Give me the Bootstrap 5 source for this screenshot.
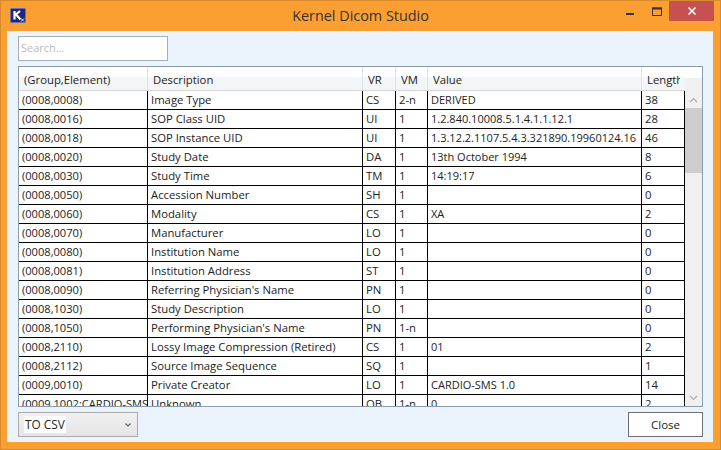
<!DOCTYPE html>
<html><head><meta charset="utf-8"><title>Kernel Dicom Studio</title>
<link href="https://cdn.jsdelivr.net/npm/bootstrap@5.3.0/dist/css/bootstrap.min.css" rel="stylesheet">
<style>
html,body{margin:0;height:450px;overflow:hidden;background:#fb9f33;}
body{font-family:"Open Sans","Noto Sans",sans-serif;font-size:11.3px;color:#222;}
.win{width:721px;height:450px;border:1px solid #d98a2c;background:#fb9f33;}
.titlebar{height:29px;}
.side{flex:0 0 105px;}
.logo{width:16px;height:15px;margin:7px 0 0 9px;}
.title{font-size:14.4px;color:#333;line-height:29px;}
.wb{height:20px;}
.wb-min{width:30px;}
.wb-max{width:24px;}
.wb-close{background:#c75050;width:45px;margin-right:6px;}
.client{margin:1px 7px 0 6px;height:411px;background:#ebf3fd;padding:5px 10px 0 11px;}
.search{width:150px;height:25px;border:1px solid #abadb3;background:#fff;color:#bbb;padding:2px;line-height:18px;font-size:11px;}
.grid{height:341px;margin-top:5px;border:1px solid #8a9bab;background:#fff;overflow:hidden;}
.gtable{table-layout:fixed;border-collapse:separate;border-spacing:0;width:666px;}
.gtable th{font-weight:400;height:24px;padding:3px 0 0 5px;border-right:1px solid #dde2e7;border-bottom:1px solid #d5d5d5;white-space:nowrap;background:linear-gradient(#fff 45%,#f4f5f6 45%);}
.gtable th div{overflow:hidden;}
.gtable th:last-child{border-right:0;padding-right:5px;}
.gtable td{height:19px;line-height:18px;padding:0 0 0 3px;border-right:1px solid #000;border-bottom:1px solid #000;white-space:nowrap;overflow:hidden;}
.gtable td:first-child{font-size:11.1px;}
.gtable td:nth-child(5){font-size:11px;}
.sb{width:17px;background:#f0f0f0;}
.sb-head{height:24px;background:linear-gradient(#fff 45%,#f0f0f1 45%);}
.sb-btn{height:17px;}
.sb-thumb{height:65px;background:#cdcdcd;}
.sb-track{flex:1;}
.sel{width:120px;height:25px;border:1px solid #acacac;background:linear-gradient(#f0f0f0,#e5e5e5);padding:0 6px;}
.sel-v{background:#fff;width:42px;margin-left:-1px;line-height:17px;font-size:11.8px;padding-left:1px;}
.close-btn{width:75px;height:25px;border:1px solid #707070;background:#fff;color:#222;font-size:11.5px;line-height:22px;padding:0;border-radius:0;}
.foot{margin-top:5px;}
</style></head>
<body>
<div class="win d-flex flex-column">
  <div class="titlebar d-flex">
    <div class="side"><svg class="logo" viewBox="0 0 16 15"><rect x=".5" y=".5" width="15" height="14" rx="1" fill="#20287e" stroke="#6a6fa8"/><path d="M4.500 3v8.500M4.500 7.500 10 3M6 6.500 10.500 11.500" stroke="#fff" stroke-width="2.200" fill="none"/><path d="M11 10.500l3 3M14 10.500l-3 3" stroke="#d8dcf2" stroke-width="1"/></svg></div>
    <div class="title flex-grow-1 text-center">Kernel Dicom Studio</div>
    <div class="side d-flex">
      <div class="wb wb-min d-flex align-items-center justify-content-center"><svg width="8" height="10" viewBox="0 0 8 10"><path d="M0 8h8" stroke="#333" stroke-width="2"/></svg></div>
      <div class="wb wb-max d-flex align-items-center justify-content-center"><svg width="10" height="9" viewBox="0 0 10 9"><path d="M.5 1h9v7.500H.5z" fill="none" stroke="#333"/><path d="M0 1.500h10" stroke="#333" stroke-width="2"/></svg></div>
      <div class="wb wb-close d-flex align-items-center justify-content-center"><svg width="10" height="10" viewBox="0 0 10 10"><path d="M1.500 1.500l7 7M8.500 1.500l-7 7" stroke="#fff" stroke-width="1.600"/></svg></div>
    </div>
  </div>
  <div class="client">
    <div class="search">Search...</div>
    <div class="grid d-flex">
      <table class="gtable flex-shrink-0">
        <colgroup><col style="width:129px"><col style="width:215px"><col style="width:33px"><col style="width:32px"><col style="width:214px"><col style="width:43px"></colgroup>
        <thead><tr><th><div>(Group,Element)</div></th><th><div>Description</div></th><th><div>VR</div></th><th><div>VM</div></th><th><div>Value</div></th><th><div>Length</div></th></tr></thead>
        <tbody>
        <tr><td>(0008,0008)</td><td>Image Type</td><td>CS</td><td>2-n</td><td>DERIVED</td><td>38</td></tr>
        <tr><td>(0008,0016)</td><td>SOP Class UID</td><td>UI</td><td>1</td><td>1.2.840.10008.5.1.4.1.1.12.1</td><td>28</td></tr>
        <tr><td>(0008,0018)</td><td>SOP Instance UID</td><td>UI</td><td>1</td><td>1.3.12.2.1107.5.4.3.321890.19960124.16</td><td>46</td></tr>
        <tr><td>(0008,0020)</td><td>Study Date</td><td>DA</td><td>1</td><td>13th October 1994</td><td>8</td></tr>
        <tr><td>(0008,0030)</td><td>Study Time</td><td>TM</td><td>1</td><td>14:19:17</td><td>6</td></tr>
        <tr><td>(0008,0050)</td><td>Accession Number</td><td>SH</td><td>1</td><td></td><td>0</td></tr>
        <tr><td>(0008,0060)</td><td>Modality</td><td>CS</td><td>1</td><td>XA</td><td>2</td></tr>
        <tr><td>(0008,0070)</td><td>Manufacturer</td><td>LO</td><td>1</td><td></td><td>0</td></tr>
        <tr><td>(0008,0080)</td><td>Institution Name</td><td>LO</td><td>1</td><td></td><td>0</td></tr>
        <tr><td>(0008,0081)</td><td>Institution Address</td><td>ST</td><td>1</td><td></td><td>0</td></tr>
        <tr><td>(0008,0090)</td><td>Referring Physician's Name</td><td>PN</td><td>1</td><td></td><td>0</td></tr>
        <tr><td>(0008,1030)</td><td>Study Description</td><td>LO</td><td>1</td><td></td><td>0</td></tr>
        <tr><td>(0008,1050)</td><td>Performing Physician's Name</td><td>PN</td><td>1-n</td><td></td><td>0</td></tr>
        <tr><td>(0008,2110)</td><td>Lossy Image Compression (Retired)</td><td>CS</td><td>1</td><td>01</td><td>2</td></tr>
        <tr><td>(0008,2112)</td><td>Source Image Sequence</td><td>SQ</td><td>1</td><td></td><td>1</td></tr>
        <tr><td>(0009,0010)</td><td>Private Creator</td><td>LO</td><td>1</td><td>CARDIO-SMS 1.0</td><td>14</td></tr>
        <tr><td>(0009,1002:CARDIO-SMS</td><td>Unknown</td><td>OB</td><td>1-n</td><td>0</td><td>2</td></tr>
        </tbody>
      </table>
      <div class="sb d-flex flex-column flex-shrink-0">
        <div class="sb-head"></div>
        <div class="sb-btn d-flex align-items-center justify-content-center"><svg width="9" height="6" viewBox="0 0 9 6"><path d="M1 5l3.500-3.500L8 5" fill="none" stroke="#adadad" stroke-width="1.100"/></svg></div>
        <div class="sb-thumb"></div>
        <div class="sb-track"></div>
        <div class="sb-btn d-flex align-items-center justify-content-center"><svg width="9" height="6" viewBox="0 0 9 6"><path d="M1 1l3.500 3.500L8 1" fill="none" stroke="#adadad" stroke-width="1.100"/></svg></div>
      </div>
    </div>
    <div class="foot d-flex justify-content-between">
      <div class="sel d-flex align-items-center justify-content-between">
        <span class="sel-v">TO CSV</span>
        <svg width="6" height="4" viewBox="0 0 6 4"><path d="M.5.500l2.500 2.500L5.500.500" fill="none" stroke="#666" stroke-width="1.200"/></svg>
      </div>
      <button class="btn close-btn" type="button">Close</button>
    </div>
  </div>
</div>
<script src="https://cdn.jsdelivr.net/npm/bootstrap@5.3.0/dist/js/bootstrap.bundle.min.js"></script>
</body></html>
